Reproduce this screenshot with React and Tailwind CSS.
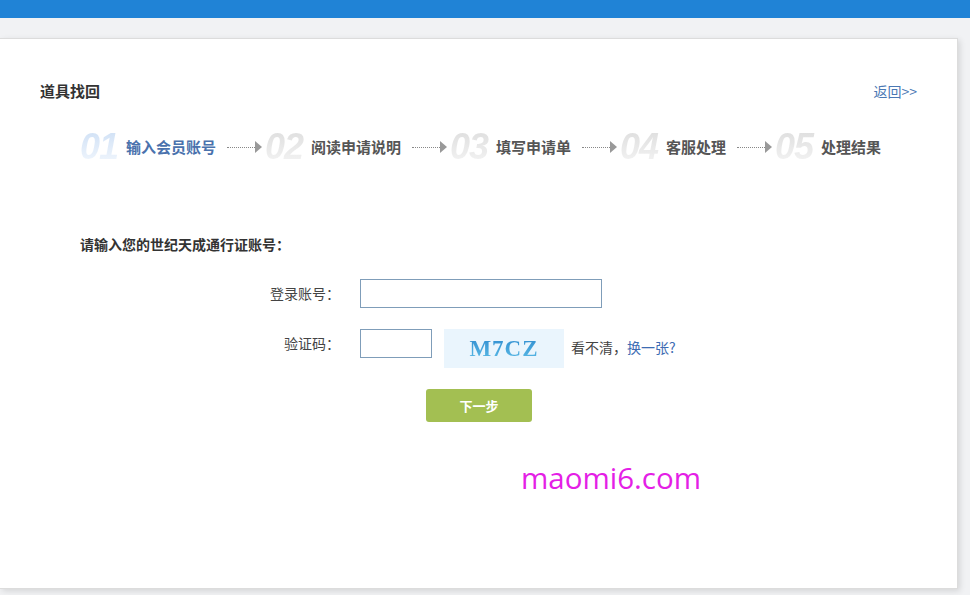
import React from "react";

const steps = [
  { no: "01", label: "输入会员账号", active: true },
  { no: "02", label: "阅读申请说明" },
  { no: "03", label: "填写申请单" },
  { no: "04", label: "客服处理" },
  { no: "05", label: "处理结果" },
];

const cjk = "font-['Microsoft_YaHei','Noto_Sans_CJK_SC',sans-serif]";

function StepArrow() {
  return (
    <div className="flex items-center ml-[11px] mr-[3px]">
      <div className="w-[28px] border-t border-dotted border-[#888]" />
      <div className="w-0 h-0 border-y-[6px] border-y-transparent border-l-[7px] border-l-[#999]" />
    </div>
  );
}

function Steps() {
  return (
    <div className="flex items-center ml-[40px] mt-[28px] h-[34px]">
      {steps.map((s, i) => (
        <React.Fragment key={s.no}>
          {i > 0 && <StepArrow />}
          <span
            className={`w-[40px] font-['Liberation_Sans',sans-serif] italic font-bold text-[36px] leading-none tracking-[-1px] bg-linear-to-b bg-clip-text text-transparent ${
              s.active ? "from-[#cfe0f5] to-[#f2f7fd]" : "from-[#dedede] to-[#f4f4f4]"
            }`}
          >
            {s.no}
          </span>
          <span
            className={`ml-[6px] text-[15px] font-bold ${cjk} ${
              s.active ? "text-[#4a72ad]" : "text-[#555]"
            }`}
          >
            {s.label}
          </span>
        </React.Fragment>
      ))}
    </div>
  );
}

export default function App() {
  return (
    <div className={`w-[970px] h-[595px] bg-[#f1f2f4] overflow-hidden ${cjk}`}>
      <div className="h-[18px] bg-[#2083d6]" />
      <div className="pt-[20px]">
        <div className="w-[958px] h-[551px] bg-white border-t border-r border-b border-[#dcdcdc] shadow-[2px_2px_6px_rgba(0,0,0,0.12)] px-[40px] pt-[41px]">
          <div className="flex items-center justify-between">
            <h1 className="text-[15px] font-bold text-[#333] leading-[22px]">道具找回</h1>
            <a className="text-[14px] text-[#4a78b4] leading-[22px]">返回&gt;&gt;</a>
          </div>

          <Steps />

          <div className="ml-[40px] mt-[70px]">
            <p className="text-[14px] font-bold text-[#333] leading-[20px]">
              请输入您的世纪天成通行证账号：
            </p>

            <div className="mt-[25px] flex flex-col gap-[21px]">
              <div className="flex items-center">
                <label className="w-[260px] text-right text-[14px] text-[#444]">登录账号：</label>
                <input className="ml-[20px] w-[242px] h-[29px] border border-[#7f9db9] outline-none px-2 text-[13px]" />
              </div>

              <div className="flex items-start">
                <label className="w-[260px] text-right text-[14px] text-[#444] leading-[29px]">验证码：</label>
                <input className="ml-[20px] w-[72px] h-[29px] border border-[#7f9db9] outline-none px-2 text-[13px]" />
                <div className="ml-[12px] w-[120px] h-[39px] bg-[#eaf5fd] flex items-center justify-center">
                  <span className="font-['Liberation_Serif',serif] font-bold text-[23px] leading-none tracking-[1px] bg-linear-to-b from-[#2f8ccf] to-[#5bbbe6] bg-clip-text text-transparent">
                    M7CZ
                  </span>
                </div>
                <span className="ml-[7px] text-[14px] text-[#444] leading-[37px]">
                  看不清，<a className="text-[#3d6cb3]">换一张?</a>
                </span>
              </div>
            </div>

            <button className="mt-[21px] ml-[346px] w-[106px] h-[33px] rounded-[3px] bg-[#a3bf52] text-white text-[13px] font-bold">
              下一步
            </button>

            <div className="mt-[36px] ml-[441px] font-['Open_Sans',sans-serif] text-[29.5px] leading-[40px] text-[#e41fe6]">
              maomi6.com
            </div>
          </div>
        </div>
      </div>
    </div>
  );
}
